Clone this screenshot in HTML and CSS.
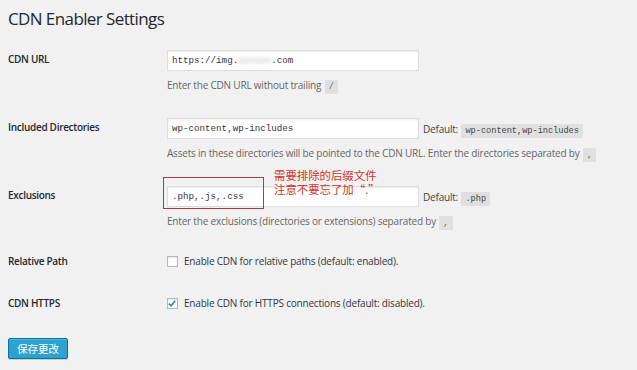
FILE: index.html
```html
<!DOCTYPE html>
<html lang="zh-CN">
<head>
  <meta charset="UTF-8" />
  <title>CDN Enabler Settings</title>
  <meta name="viewport" content="width=device-width, initial-scale=1.0" />
  <link rel="stylesheet" href="styles.css">
</head>
<body>
  <div class="wrap">
    <h1>CDN Enabler Settings</h1>

    <form>
      <table class="form-table">
        <tr>
          <th>CDN URL</th>
          <td>
            <div class="field">https://img.<span class="blur">ixxxxx</span>.com</div>
            <p class="description">Enter the CDN URL without trailing <code>/</code></p>
          </td>
        </tr>
        <tr>
          <th>Included Directories</th>
          <td>
            <div class="line">
              <div class="field">wp-content,wp-includes</div>
              <span class="default">Default: <code class="mono">wp-content,wp-includes</code></span>
            </div>
            <p class="description">Assets in these directories will be pointed to the CDN URL. Enter the directories separated by <code>,</code></p>
          </td>
        </tr>
        <tr class="short">
          <th>Exclusions</th>
          <td class="noted">
            <div class="line">
              <div class="field">.php,.js,.css</div>
              <span class="default">Default: <code class="mono">.php</code></span>
            </div>
            <p class="description">Enter the exclusions (directories or extensions) separated by <code>,</code></p>
            <div class="mark"></div>
            <div class="note">需要排除的后缀文件<br>注意不要忘了加“.”</div>
          </td>
        </tr>
        <tr>
          <th>Relative Path</th>
          <td>
            <label class="check"><span class="box"></span>Enable CDN for relative paths (default: enabled).</label>
          </td>
        </tr>
        <tr>
          <th>CDN HTTPS</th>
          <td>
            <label class="check"><span class="box checked">
              <svg viewBox="0 0 12 12" width="11" height="11"><path d="M2.3 6.2 L4.8 8.8 L9.8 2.6" fill="none" stroke="#1e8cbe" stroke-width="1.9"/></svg>
            </span>Enable CDN for HTTPS connections (default: disabled).</label>
          </td>
        </tr>
      </table>

      <p class="submit"><button type="button" class="button-primary">保存更改</button></p>
    </form>
  </div>
</body>
</html>
```

FILE: styles.css
```css
body {
  background: #f1f1f1;
  color: #23282d;
  font-family: "Open Sans", "Noto Sans CJK SC", sans-serif;
  font-size: 10px;
  letter-spacing: -0.2px;
  margin: 0;
}
.wrap {
  padding: 0 8px;
}
h1 {
  margin: 0;
  padding: 9px 0 0;
  font-size: 17px;
  font-weight: 400;
  letter-spacing: -0.6px;
  line-height: 20px;
  height: 29px;
}
.form-table {
  border-collapse: collapse;
}
.form-table th {
  width: 159px;
  padding: 12px 0;
  text-align: left;
  vertical-align: top;
  font-weight: 600;
  letter-spacing: -0.3px;
  line-height: 18px;
}
.form-table td {
  padding: 12px 0;
  vertical-align: top;
  line-height: 18px;
}
.form-table .short th,
.form-table .short td {
  padding-bottom: 10px;
}
.line {
  display: flex;
  align-items: center;
  gap: 4px;
}
.field {
  width: 252px;
  height: 21px;
  box-sizing: border-box;
  padding: 0 4px;
  background: #fff;
  border: 1px solid #ddd;
  box-shadow: inset 0 1px 2px rgba(0, 0, 0, .07);
  font-family: "Liberation Mono", monospace;
  font-size: 9.2px;
  letter-spacing: 0;
  line-height: 19px;
  color: #32373c;
}
.blur {
  color: transparent;
  text-shadow: 0 0 4px rgba(0, 0, 0, .35);
}
.default {
  color: #444;
}
code {
  display: inline-block;
  padding: 0 4px;
  margin: 0 1px;
  background: rgba(0, 0, 0, .07);
  font-family: "Liberation Mono", monospace;
  font-size: 8.6px;
  letter-spacing: 0;
  line-height: 14px;
}
.description {
  margin: 6px 0 0;
  color: #666;
  line-height: 16px;
}
.noted {
  position: relative;
}
.mark {
  position: absolute;
  left: -4px;
  top: 3px;
  width: 99px;
  height: 30px;
  border: 1px solid #b03a3a;
}
.note {
  position: absolute;
  left: 107px;
  top: -6px;
  color: #d0342c;
  font-family: "Noto Sans CJK SC", sans-serif;
  font-size: 11.4px;
  letter-spacing: 0;
  line-height: 14px;
}
.check {
  display: flex;
  align-items: center;
  gap: 6px;
  color: #32373c;
}
.box {
  width: 11px;
  height: 11px;
  box-sizing: border-box;
  border: 1px solid #b4b9be;
  background: #fff;
  box-shadow: inset 0 1px 2px rgba(0, 0, 0, .1);
  display: flex;
}
.box svg {
  margin: -1px 0 0 -1px;
}
.submit {
  margin: 0;
  padding: 14px 0 12px;
}
.button-primary {
  height: 21px;
  padding: 0 8px;
  background: #2ea2cc;
  border: 1px solid #0074a2;
  border-radius: 2px;
  box-shadow: inset 0 1px 0 rgba(120, 200, 230, .5), 0 1px 0 rgba(0, 0, 0, .15);
  color: #fff;
  font-family: "Noto Sans CJK SC", sans-serif;
  font-size: 10.5px;
  letter-spacing: 0;
  cursor: pointer;
}
```
